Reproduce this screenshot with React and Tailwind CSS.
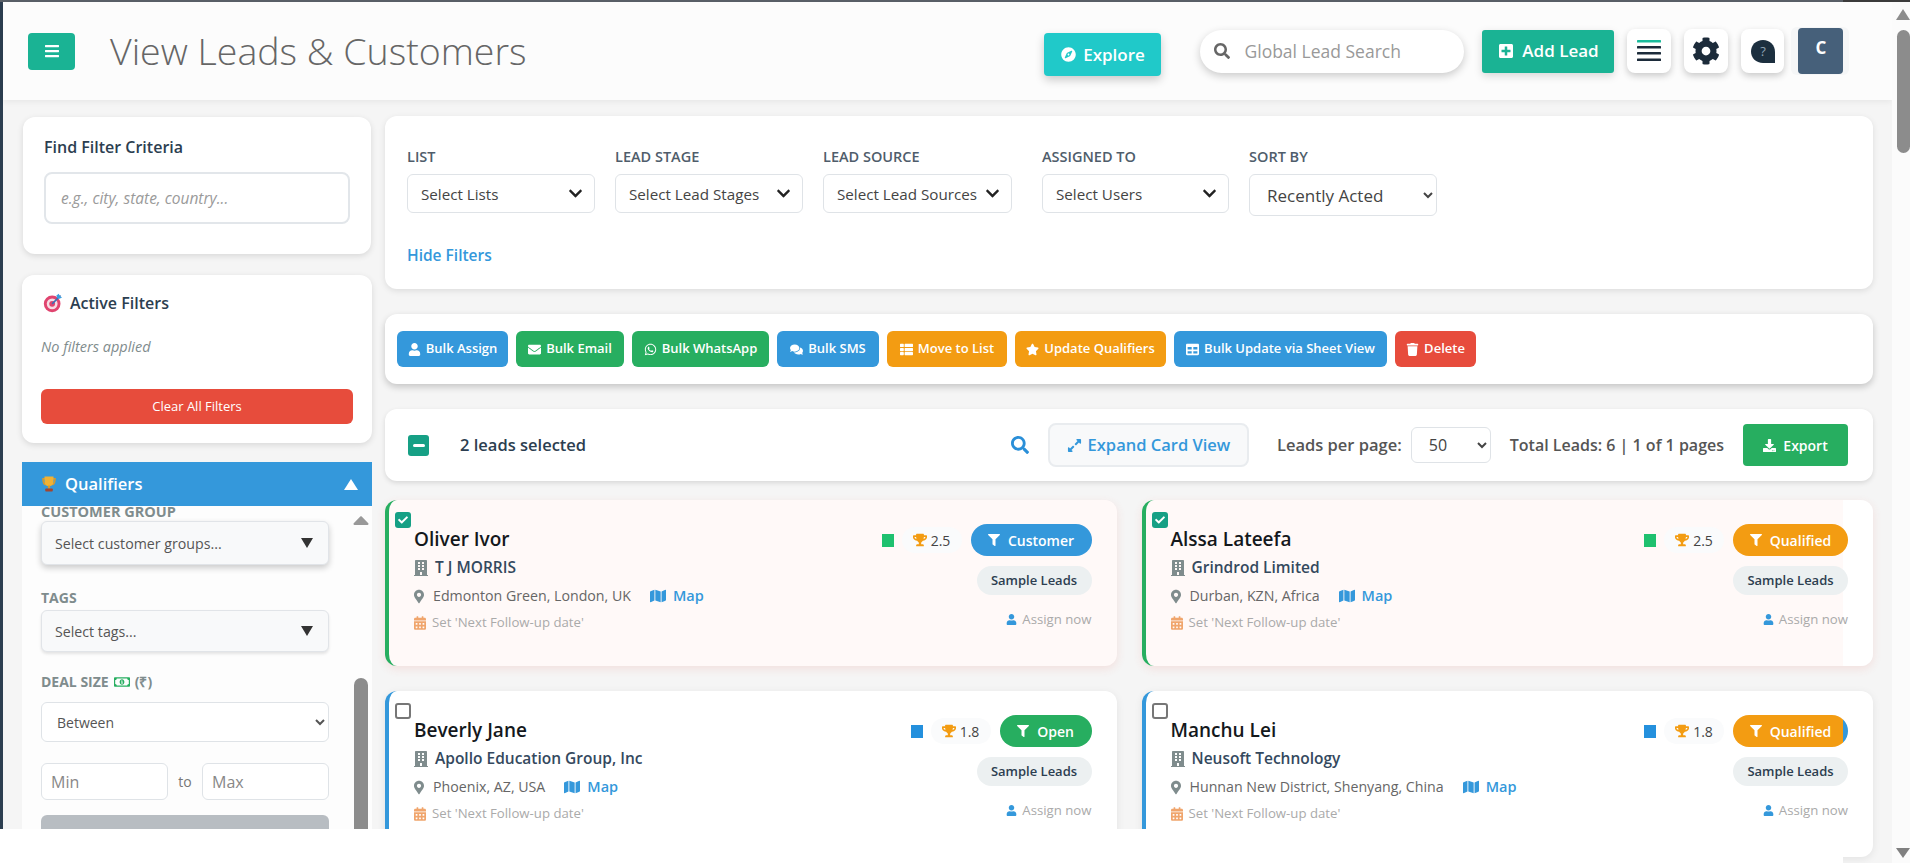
import {
  FaBars, FaCompass, FaSearch, FaPlusSquare, FaCog, FaUser, FaEnvelope, FaWhatsapp, FaComments,
  FaThList, FaStar, FaTable, FaTrash, FaFilter, FaTrophy, FaBuilding, FaMapMarkerAlt, FaMap,
  FaCalendarAlt, FaExpandAlt, FaDownload, FaCheck, FaChevronDown, FaRegMoneyBillAlt, FaCaretUp,
} from "react-icons/fa";

const bulkActions = [
  { label: "Bulk Assign", icon: FaUser, color: "bg-[#3498db]", width: "w-[111px]" },
  { label: "Bulk Email", icon: FaEnvelope, color: "bg-[#27ae60]", width: "w-[108px]" },
  { label: "Bulk WhatsApp", icon: FaWhatsapp, color: "bg-[#27ae60]", width: "w-[137px]" },
  { label: "Bulk SMS", icon: FaComments, color: "bg-[#3498db]", width: "w-[102px]" },
  { label: "Move to List", icon: FaThList, color: "bg-[#f39c12]", width: "w-[120px]" },
  { label: "Update Qualifiers", icon: FaStar, color: "bg-[#f39c12]", width: "w-[151px]" },
  { label: "Bulk Update via Sheet View", icon: FaTable, color: "bg-[#3498db]", width: "w-[213px]" },
  { label: "Delete", icon: FaTrash, color: "bg-[#e74c3c]", width: "w-[81px]" },
];

const leads = [
  { name: "Oliver Ivor", company: "T J MORRIS", place: "Edmonton Green, London, UK", score: "2.5", stage: "Customer", selected: true, tone: "green", pill: "bg-[#3498db] w-[121px]" },
  { name: "Alssa Lateefa", company: "Grindrod Limited", place: "Durban, KZN, Africa", score: "2.5", stage: "Qualified", selected: true, tone: "green", pill: "bg-[#f39c12] w-[115px]", cut: true },
  { name: "Beverly Jane", company: "Apollo Education Group, Inc", place: "Phoenix, AZ, USA", score: "1.8", stage: "Open", selected: false, tone: "blue", pill: "bg-[#27ae60] w-[92px]" },
  { name: "Manchu Lei", company: "Neusoft Technology", place: "Hunnan New District, Shenyang, China", score: "1.8", stage: "Qualified", selected: false, tone: "blue", pill: "bg-[linear-gradient(90deg,#f39c12_110px,#3498db_110px)] w-[115px]" },
];

const Trophy = () => (
  <svg viewBox="0 0 24 24" className="w-[18px] h-[20px]">
    <path d="M3 4h4v2H5c0 3 1 5 3 6l-1 2C4 13 3 9 3 4zM21 4h-4v2h2c0 3-1 5-3 6l1 2c3-1 4-5 4-10z" fill="#d99a2b" />
    <path d="M6 2h12v7c0 4-3 6-6 6s-6-2-6-6z" fill="#f2b233" />
    <rect x="10.5" y="14" width="3" height="4" fill="#d99a2b" />
    <rect x="7" y="18" width="10" height="4" rx="1" fill="#a3452f" />
  </svg>
);

const Target = () => (
  <svg viewBox="0 0 24 24" className="w-5 h-5">
    <circle cx="11" cy="13" r="10" fill="#e0446f" />
    <circle cx="11" cy="13" r="6.5" fill="#f6dce4" />
    <circle cx="11" cy="13" r="3.5" fill="#e0446f" />
    <path d="M11 13 21 3" stroke="#3b6fb5" strokeWidth="2" />
    <path d="M19 1l1 3 3 1-3 2-3-1-1-3z" fill="#3aa0e0" />
  </svg>
);

const ListIcon = () => (
  <svg viewBox="0 0 24 22" className="w-[24px] h-[22px]">
    <rect x="0" y="0" width="24" height="2.6" rx="0.6" fill="#1abc9c" />
    <rect x="0" y="6" width="24" height="2.6" rx="0.6" fill="#1c2b3a" />
    <rect x="0" y="12" width="24" height="2.6" rx="0.6" fill="#1c2b3a" />
    <rect x="0" y="18.4" width="24" height="2.6" rx="0.6" fill="#1c2b3a" />
  </svg>
);

const HelpIcon = () => (
  <svg viewBox="0 0 26 25" className="w-[26px] h-[25px]">
    <path d="M13 1C6 1 1 6 1 12.5S6 24 13 24h12V13C25 6 20 1 13 1z" fill="#1c2f3f" />
    <text x="13" y="17" textAnchor="middle" fontSize="13" fill="#8fa3b3">?</text>
  </svg>
);

const FilterSelect = ({ label, text, width }) => (
  <div className={width}>
    <div className="text-[14.5px] leading-[18px] font-semibold text-[#4f5d6b] mb-[8px] -mt-[1px]">{label}</div>
    <div className="h-[39px] flex items-center justify-between pl-[13px] pr-[11px] bg-white border border-[#dfe3e7] rounded-md text-[15.2px] text-[#444]">
      <span className="whitespace-nowrap pt-[2px]">{text}</span>
      <FaChevronDown className="text-[15px] text-[#222] shrink-0" />
    </div>
  </div>
);

const SideSelect = ({ text, shadow }) => (
  <div className={`h-[42px] flex items-center justify-between pl-[13px] pr-[15px] bg-[#f8f9fa] border border-[#e1e4e8] rounded-md text-[14.2px] text-[#555] ${shadow}`}>
    <span className="pt-[1px]">{text}</span>
    <span className="w-0 h-0 border-l-[6px] border-r-[6px] border-t-[10px] border-l-transparent border-r-transparent border-t-[#333]"></span>
  </div>
);

const LeadCard = ({ lead }) => (
  <div
    className={`h-[166px] border-l-4 rounded-xl pl-[25px] pr-[25px] pt-[12px] ${lead.tone === "green" ? "border-[#27ae60]" : "border-[#3498db]"} ${
      lead.cut
        ? "bg-[linear-gradient(90deg,#fff9f8_697px,#ffffff_697px)] shadow-[0_3px_10px_rgba(231,76,60,0.12)]"
        : lead.selected
          ? "bg-[#fff9f8] shadow-[0_3px_10px_rgba(231,76,60,0.12)]"
          : "bg-white shadow-[0_2px_8px_rgba(0,0,0,0.08)]"
    }`}
  >
    {lead.selected ? (
      <div className="-ml-[19px] w-[16px] h-[16px] rounded-[3px] bg-[#16a085] flex items-center justify-center">
        <FaCheck className="text-white text-[10px]" />
      </div>
    ) : (
      <div className="-ml-[19px] w-[16px] h-[16px] rounded-[3px] border-2 border-[#777] bg-white"></div>
    )}
    <div className="flex justify-between -mt-[1px]">
      <div>
        <div className="text-[19px] leading-[24px] font-semibold text-[#14181c]">{lead.name}</div>
        <div className="flex items-center mt-[6px] h-[22px]">
          <FaBuilding className="text-[#7f8c8d] text-[18px] w-[14px]" />
          <span className="ml-[7px] text-[15.5px] font-semibold text-[#34495e]">{lead.company}</span>
        </div>
        <div className="flex items-center mt-[6px] h-[22px]">
          <FaMapMarkerAlt className="text-[#7f8c8d] text-[15px] w-[10px]" />
          <span className="ml-[9px] text-[14.2px] text-[#666]">{lead.place}</span>
          <FaMap className="ml-[19px] text-[#3498db] text-[16px]" />
          <span className="ml-[7px] text-[14.5px] font-semibold text-[#3498db]">Map</span>
        </div>
        <div className="flex items-center mt-[5px] h-[22px]">
          <FaCalendarAlt className="text-[#f0a56c] text-[14px] w-[12px]" />
          <span className="ml-[6px] text-[13.2px] text-[#aaa]">Set 'Next Follow-up date'</span>
        </div>
      </div>
      <div className="flex flex-col items-end -mt-[3px]">
        <div className="flex items-center">
          <div className={`w-[12px] h-[13px] ${lead.tone === "green" ? "bg-[#1fc16f]" : "bg-[#2490dd]"}`}></div>
          <div className="ml-[8px] w-[60px] h-[26px] rounded-full bg-[#fafbfc] flex items-center justify-center gap-[4px]">
            <FaTrophy className="text-[#f39c12] text-[14px]" />
            <span className="text-[14px] text-[#444]">{lead.score}</span>
          </div>
          <div className={`ml-[9px] h-[32px] rounded-full flex items-center justify-center gap-[8px] text-white text-[14px] font-semibold ${lead.pill}`}>
            <FaFilter className="text-[12px]" />
            {lead.stage}
          </div>
        </div>
        <div className="mt-[10px] w-[115px] h-[29px] rounded-full bg-[#ecf0f1] text-[13px] font-semibold text-[#2c3e50] flex items-center justify-center">
          Sample Leads
        </div>
        <div className="mt-[15px] flex items-center gap-[5px] text-[13.2px] text-[#aaa] whitespace-nowrap">
          <FaUser className="text-[#3498db] text-[11px]" />
          Assign now
        </div>
      </div>
    </div>
  </div>
);

const App = () => {
  return (
    <div className="relative w-[1910px] h-[863px] overflow-hidden flex flex-col bg-[#f5f5f5] font-['Open_Sans',sans-serif]">
      <div className="h-[2px] shrink-0 flex">
        <div className="w-[1843px] bg-[#5a6068]"></div>
        <div className="flex-1 bg-[#3c3c3c]"></div>
      </div>
      <div className="flex flex-1 min-h-0">
        <div className="w-[3px] shrink-0 bg-[#2c3e50]"></div>
        <div className="w-[1889px] shrink-0">
          {/* header */}
          <div className="h-[98px] bg-[#fcfcfc] shadow-[0_2px_6px_rgba(0,0,0,0.06)] flex items-center pl-[25px]">
            <button className="w-[47px] h-[37px] rounded bg-[#1ab394] flex items-center justify-center text-white text-[16px]">
              <FaBars />
            </button>
            <h1 className="ml-[35px] text-[37.5px] font-light text-[#666] whitespace-nowrap">View Leads &amp; Customers</h1>
            <button className="ml-[518px] mt-[7px] w-[117px] h-[43px] rounded bg-[#20c9c9] shadow-[0_4px_10px_rgba(0,0,0,0.2)] flex items-center justify-center gap-[7px] text-white text-[17px] font-semibold">
              <FaCompass className="text-[15px]" />
              Explore
            </button>
            <div className="ml-[39px] w-[264px] h-[43px] rounded-full bg-white shadow-[0_3px_8px_rgba(0,0,0,0.2)] flex items-center pl-[14px] gap-[14px]">
              <FaSearch className="text-[#666] text-[16px] shrink-0" />
              <input placeholder="Global Lead Search" className="w-[200px] text-[17.5px] outline-none placeholder:text-[#999]" />
            </div>
            <button className="ml-[18px] w-[132px] h-[43px] rounded-[3px] bg-[#1ab394] shadow-[0_3px_8px_rgba(0,0,0,0.15)] flex items-center justify-center gap-[8px] text-white text-[17px] font-semibold">
              <FaPlusSquare className="text-[16px]" />
              Add Lead
            </button>
            <button className="ml-[13px] w-[44px] h-[44px] rounded-lg bg-white shadow-[0_3px_7px_rgba(0,0,0,0.2)] flex items-center justify-center">
              <ListIcon />
            </button>
            <button className="ml-[13px] w-[44px] h-[44px] rounded-lg bg-white shadow-[0_3px_7px_rgba(0,0,0,0.2)] flex items-center justify-center">
              <FaCog className="text-[28px] text-[#1c2b3a]" />
            </button>
            <button className="ml-[13px] w-[43px] h-[44px] rounded-lg bg-white shadow-[0_3px_7px_rgba(0,0,0,0.2)] flex items-center justify-center">
              <HelpIcon />
            </button>
            <div className="ml-[7px] w-[58px] h-[48px] rounded-md bg-[#f5f6f7] flex items-center pl-[7px]">
              <div className="w-[45px] h-[46px] rounded bg-[#46607a] flex justify-center pt-[8px] text-white text-[17px] leading-[24px] font-bold">C</div>
            </div>
          </div>

          <div className="flex pl-[19px] pt-[16px]">
            {/* sidebar */}
            <div className="w-[350px] shrink-0">
              <div className="mx-px mt-px h-[137px] rounded-xl bg-white shadow-[0_2px_6px_rgba(0,0,0,0.12)] pl-[21px] pr-[21px] pt-[19px]">
                <h3 className="text-[16px] leading-[22px] font-semibold text-[#2c3e50]">Find Filter Criteria</h3>
                <input
                  placeholder="e.g., city, state, country..."
                  className="mt-[14px] w-full h-[52px] px-[15px] border-2 border-[#e2e6ea] rounded-lg outline-none text-[15.5px] italic placeholder:text-[#9a9a9a]"
                />
              </div>
              <div className="mt-[21px] h-[168px] rounded-xl bg-white shadow-[0_2px_6px_rgba(0,0,0,0.12)] px-[19px] pt-[17px]">
                <div className="flex items-center gap-[7px] pl-[2px]">
                  <Target />
                  <h3 className="text-[16px] leading-[22px] font-semibold text-[#2c3e50]">Active Filters</h3>
                </div>
                <p className="mt-[24px] text-[14.5px] leading-[18px] italic text-[#7f8c8d]">No filters applied</p>
                <button className="mt-[33px] w-full h-[35px] rounded-md bg-[#e74c3c] text-white text-[13px] font-medium">Clear All Filters</button>
              </div>
              <div className="mt-[19px] h-[44px] bg-[#3498db] flex items-center pl-[18px] pr-[14px] text-white">
                <Trophy />
                <span className="ml-[7px] text-[16.5px] font-semibold">Qualifiers</span>
                <span className="ml-auto w-0 h-0 border-l-[7px] border-r-[7px] border-b-[11px] border-l-transparent border-r-transparent border-b-white"></span>
              </div>
              <div className="h-[340px] overflow-hidden bg-[#fdfdfd] flex">
                <div className="w-[327px] shrink-0 pl-[19px] pr-[20px]">
                  <div className="h-[15px] overflow-hidden text-[14.5px] leading-[11px] font-bold text-[#7f8c8d]">CUSTOMER GROUP</div>
                  <SideSelect text="Select customer groups..." shadow="h-[44px] shadow-[0_3px_6px_rgba(0,0,0,0.2)]" />
                  <div className="mt-[23px] text-[14px] leading-[20px] font-bold text-[#7f8c8d]">TAGS</div>
                  <div className="mt-[2px]">
                    <SideSelect text="Select tags..." shadow="shadow-[0_2px_3px_rgba(0,0,0,0.1)]" />
                  </div>
                  <div className="mt-[20px] flex items-center gap-[5px] text-[14px] leading-[20px] font-bold text-[#7f8c8d]">
                    DEAL SIZE <FaRegMoneyBillAlt className="text-[#27ae60] text-[16px]" /> (₹)
                  </div>
                  <select className="mt-[10px] w-full h-[40px] pl-[11px] pr-[4px] bg-white border border-[#dfe3e7] rounded-md text-[14px] text-[#555]">
                    <option>Between</option>
                  </select>
                  <div className="mt-[21px] flex items-center">
                    <input placeholder="Min" className="w-[127px] h-[37px] px-[9px] bg-white border border-[#dfe3e7] rounded-md text-[16px] outline-none placeholder:text-[#888]" />
                    <span className="w-[34px] text-center text-[14px] text-[#777]">to</span>
                    <input placeholder="Max" className="w-[127px] h-[37px] px-[9px] bg-white border border-[#dfe3e7] rounded-md text-[16px] outline-none placeholder:text-[#888]" />
                  </div>
                  <div className="mt-[15px] h-[40px] rounded-md bg-[#b8bdc2]"></div>
                </div>
                <div className="w-[23px] shrink-0 flex flex-col items-center">
                  <FaCaretUp className="mt-[1px] text-[#999] text-[26px]" />
                  <div className="mt-[145px] w-[14px] h-[160px] rounded-full bg-[#8c8c8c]"></div>
                </div>
              </div>
            </div>

            {/* main column */}
            <div className="ml-[13px] w-[1488px] shrink-0">
              <div className="h-[173px] rounded-xl bg-white shadow-[0_2px_6px_rgba(0,0,0,0.1)] pl-[22px] pt-[33px]">
                <div className="flex items-start gap-[20px]">
                  <FilterSelect label="LIST" text="Select Lists" width="w-[188px]" />
                  <FilterSelect label="LEAD STAGE" text="Select Lead Stages" width="w-[188px]" />
                  <FilterSelect label="LEAD SOURCE" text="Select Lead Sources" width="w-[189px] mr-[10px]" />
                  <FilterSelect label="ASSIGNED TO" text="Select Users" width="w-[187px]" />
                  <div className="w-[188px]">
                    <div className="text-[14.5px] leading-[18px] font-semibold text-[#4f5d6b] mb-[8px] -mt-[1px]">SORT BY</div>
                    <select className="w-full h-[42px] pl-[13px] bg-white border border-[#dfe3e7] rounded-md text-[17px] text-[#444]">
                      <option>Recently Acted</option>
                    </select>
                  </div>
                </div>
                <div className="mt-[29px] text-[15.5px] leading-[20px] font-semibold text-[#3498db]">Hide Filters</div>
              </div>

              <div className="mt-[25px] h-[70px] rounded-xl bg-white shadow-[0_3px_7px_rgba(0,0,0,0.2)] flex items-center pl-[12px] gap-[8px]">
                {bulkActions.map((action) => {
                  const Icon = action.icon;
                  return (
                    <button key={action.label} className={`h-[36px] rounded-md flex items-center justify-center gap-[5px] text-white text-[13px] font-semibold whitespace-nowrap ${action.color} ${action.width}`}>
                      <Icon className="text-[13px]" />
                      {action.label}
                    </button>
                  );
                })}
              </div>

              <div className="mt-[25px] h-[72px] rounded-xl bg-white shadow-[0_2px_5px_rgba(0,0,0,0.12)] flex items-center pl-[23px] pr-[25px]">
                <div className="w-[21px] h-[21px] rounded-[3px] bg-[#16a085] flex items-center justify-center">
                  <div className="w-[12px] h-[3px] rounded bg-white"></div>
                </div>
                <span className="ml-[31px] text-[16.5px] font-semibold text-[#2c3e50]">2 leads selected</span>
                <FaSearch className="ml-auto text-[#2a8fd8] text-[18px]" />
                <button className="ml-[19px] w-[201px] h-[44px] rounded-lg bg-[#f8f9fa] border-2 border-[#e9ecef] flex items-center justify-center gap-[6px] text-[16.5px] font-semibold text-[#3498db]">
                  <FaExpandAlt className="text-[15px]" />
                  Expand Card View
                </button>
                <span className="ml-[28px] text-[16.5px] font-semibold text-[#555]">Leads per page:</span>
                <select className="ml-[9px] w-[80px] h-[36px] pl-[13px] bg-white border border-[#dfe3e7] rounded-md text-[16px] text-[#444]">
                  <option>50</option>
                </select>
                <span className="ml-[19px] text-[16px] font-semibold text-[#555]">Total Leads: 6 | 1 of 1 pages</span>
                <button className="ml-[19px] w-[105px] h-[42px] rounded bg-[#27ae60] flex items-center justify-center gap-[7px] text-white text-[14px] font-semibold">
                  <FaDownload className="text-[13px]" />
                  Export
                </button>
              </div>

              <div className="mt-[19px] grid grid-cols-2 gap-[25px]">
                {leads.map((lead) => (
                  <LeadCard key={lead.name} lead={lead} />
                ))}
              </div>
            </div>
          </div>
        </div>

        {/* page scrollbar */}
        <div className="w-[18px] shrink-0 bg-[#fbfbfb] flex flex-col items-start pl-[4px]">
          <div className="mt-[7px] w-0 h-0 border-l-[7px] border-r-[7px] border-b-[11px] border-l-transparent border-r-transparent border-b-[#8c8c8c]"></div>
          <div className="mt-[10px] ml-[1px] w-[13px] h-[123px] rounded-full bg-[#8c8c8c]"></div>
          <div className="mt-auto mb-[5px] w-0 h-0 border-l-[7px] border-r-[7px] border-t-[10px] border-l-transparent border-r-transparent border-t-[#808080]"></div>
        </div>
      </div>

      {/* white band at the bottom of the capture */}
      <div className="absolute left-0 bottom-0 w-[1843px] h-[34px] bg-white"></div>
    </div>
  );
};

export default App;
